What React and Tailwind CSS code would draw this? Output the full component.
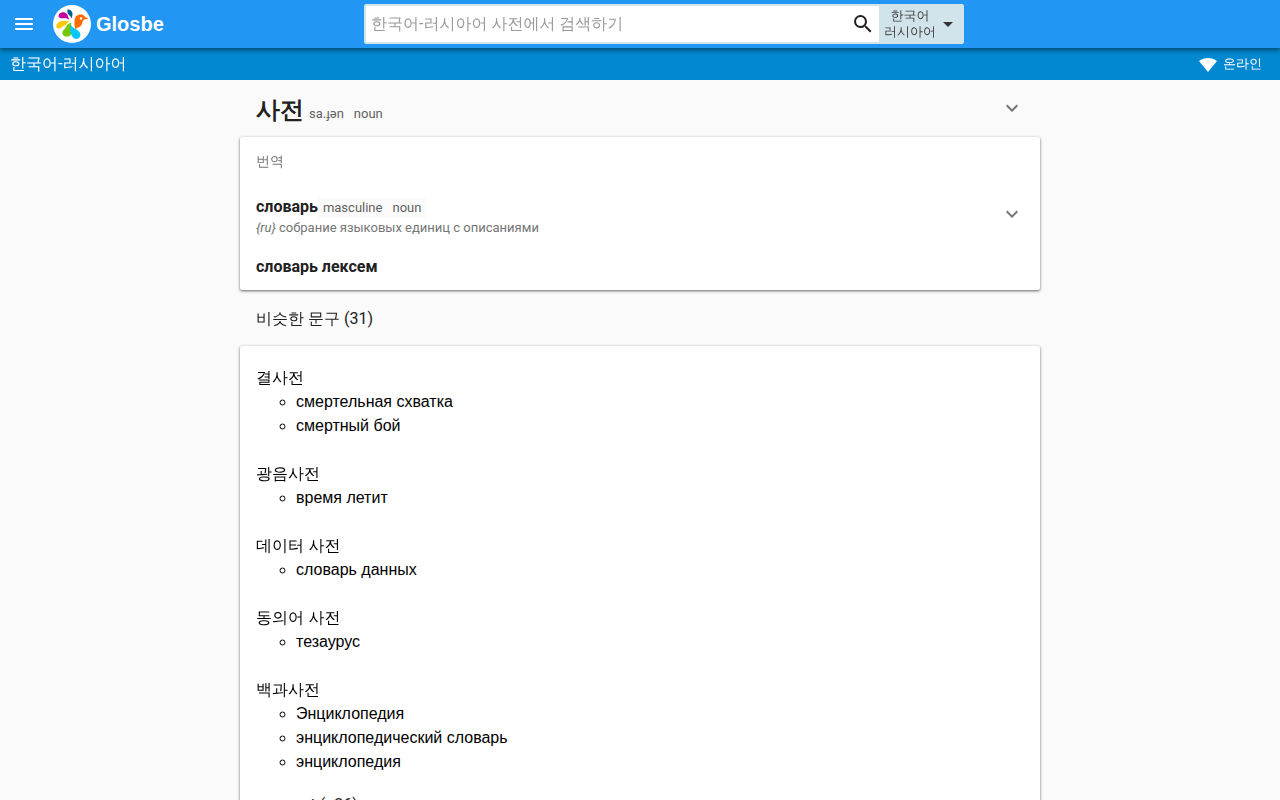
import { useState } from "react";

const phrases = [
  { source: "결사전", targets: ["смертельная схватка", "смертный бой"] },
  { source: "광음사전", targets: ["время летит"] },
  { source: "데이터 사전", targets: ["словарь данных"] },
  { source: "동의어 사전", targets: ["тезаурус"] },
  {
    source: "백과사전",
    targets: ["Энциклопедия", "энциклопедический словарь", "энциклопедия"],
  },
];

const Logo = () => (
  <svg viewBox="0 0 38 38" className="size-[38px]" aria-hidden="true">
    <circle cx="19" cy="19" r="19" fill="#fff" />
    <path d="M5.500 11c0-4 6-5 8.500-2 1.500 2 1 4 2.500 5.500-2 .2-2.500-1.500-4.500-1.500-3 .5-6.500.5-6.500-2z" fill="#c6009c" />
    <path d="M14.500 4.500c3 0 5 2 5 4.500 0 2-.8 2.500-.3 4.500-1.500-.8-1.200-2-2.700-3-2-1.500-2.500-3.500-2-6z" fill="#005e94" />
    <path d="M18 15.500c-3 .5-3.500 2.500-5 4-1.500 1.500-2.500 1-4 2.700-2 2.300-5.800 1.300-5.800-.7 0-3 2.800-5.500 6.300-5.500 3.500-.2 5.500.5 8.500-.5z" fill="#ffcb00" />
    <path d="M18.500 17.500c-1.500 3 .5 5 .5 8 0 4-2 6-5 6-3.500 0-5-2-4.500-4.500.5-2.500 2.500-2.500 3.500-5 .8-2 2.500-4 5.500-4.500z" fill="#76c900" />
    <path d="M18 20c1.500 3 4.500 3.500 7 5.500 3 2.500 3 5.500 1 7.500-2 1.800-5.500 1-7-2-1.500-3-2.500-7.500-1-11z" fill="#00c8ff" />
    <path d="M21.500 16c0-5 3.500-7 7-6.500 3 .5 3.500 3.500 7.300 4.300-2.300.7-4.800.2-5.800 2-1 2-.5 3.500-2.500 5.500-1.500 1.500-3.500 1-5 3-1.300-3-1-5.300-1-8.300z" fill="#ff6b00" />
    <circle cx="28" cy="13.500" r="1.200" fill="#fff" />
  </svg>
);

const Chevron = () => (
  <svg viewBox="0 0 24 24" className="size-6" fill="#757575" aria-hidden="true">
    <path d="M16.590 8.590 12 13.170 7.410 8.590 6 10l6 6 6-6z" />
  </svg>
);

const Tags = ({ items, className }) => (
  <span className={`px-[5px] text-[13px] leading-5 text-[#616161] ${className}`}>
    {items.map((item, i) => (
      <span key={item} className={i > 0 ? "ml-[10px]" : ""}>
        {item}
      </span>
    ))}
  </span>
);

const Header = () => {
  const [query, setQuery] = useState("");

  return (
    <header className="relative z-10 flex h-12 items-center bg-[#2196f3] text-white shadow-[0_2px_5px_rgba(0,0,0,0.5)]">
      <div className="flex flex-1 items-center">
        <button type="button" aria-label="Menu" className="ml-3">
          <svg viewBox="0 0 24 24" className="size-6" fill="currentColor">
            <path d="M3 18h18v-2H3v2zm0-5h18v-2H3v2zm0-7v2h18V6H3z" />
          </svg>
        </button>
        <a
          href="#home"
          className="ml-[17px] flex items-center gap-[5px] font-['Liberation_Sans',sans-serif] text-xl font-bold"
        >
          <Logo />
          Glosbe
        </a>
      </div>
      <form
        className="ml-12 flex h-10 w-full max-w-[600px] rounded-xs border-2 border-[#d1e4eb] bg-[#d1e4eb]"
        onSubmit={(e) => e.preventDefault()}
      >
        <input
          type="text"
          autoFocus
          aria-label="검색"
          placeholder="한국어-러시아어 사전에서 검색하기"
          className="min-w-0 flex-1 bg-white pl-[5px] text-base text-[#212121] outline-none placeholder:text-[#9a9a9a]"
          value={query}
          onChange={(e) => setQuery(e.target.value)}
        />
        <button type="submit" aria-label="검색" className="bg-white px-1">
          <svg viewBox="0 0 24 24" className="size-6" fill="#212121">
            <path d="M15.500 14h-.79l-.28-.27A6.471 6.471 0 0 0 16 9.500 6.500 6.500 0 1 0 9.500 16c1.610 0 3.090-.59 4.230-1.570l.27.28v.79l5 4.990L20.490 19l-4.990-5zm-6 0C7.010 14 5 11.990 5 9.500S7.010 5 9.500 5 14 7.010 14 9.500 11.990 14 9.500 14z" />
          </svg>
        </button>
        <button
          type="button"
          className="flex items-center pl-[5px] pr-[2px] text-[13px] leading-4 text-[#424242]"
        >
          <span className="text-center">
            한국어
            <br />
            러시아어
          </span>
          <svg viewBox="0 0 24 24" className="size-6" fill="#333">
            <path d="m7 10 5 5 5-5z" />
          </svg>
        </button>
      </form>
      <div className="flex-1 max-lg:hidden" />
    </header>
  );
};

export default function App() {
  return (
    <div className="min-h-screen bg-[#fafafa] font-[Roboto,'Liberation_Sans','WenQuanYi_Zen_Hei','Noto_Sans_CJK_KR',sans-serif] text-base text-[#212121]">
      <Header />
      <nav className="flex h-8 items-center justify-between bg-[#0288d1] pl-[10px] pr-[18px] text-white">
        <a href="#ko-ru">한국어-러시아어</a>
        <span className="flex items-center gap-[5px] text-[13px]">
          <svg viewBox="0 0 20 16" className="h-4 w-5" fill="#fff" aria-hidden="true">
            <path d="M1 5c5-4 13-4 18 0l-9 11z" />
          </svg>
          온라인
        </span>
      </nav>

      <main className="mx-auto max-w-[800px]">
        <div className="flex h-[57px] items-center justify-between px-4">
          <h1 className="pt-[2px] font-[Roboto,'Liberation_Sans',sans-serif] text-2xl font-bold">
            사전
            <Tags items={["sa.ɟən", "noun"]} className="font-normal" />
          </h1>
          <button type="button" aria-label="사전" className="mb-[2px]">
            <Chevron />
          </button>
        </div>

        <section className="rounded-xs bg-white px-4 shadow-[0_1px_3px_rgba(0,0,0,0.6)]">
          <h2 className="flex h-12 items-center text-sm text-[#757575]">번역</h2>
          <div className="flex items-start justify-between pt-3">
            <div>
              <h3 className="leading-5 font-bold">
                словарь
                <Tags
                  items={["masculine", "noun"]}
                  className="inline-block bg-[#fafafa] font-normal"
                />
              </h3>
              <p className="text-[13px] leading-5 text-[#757575]">
                <i>{"{ru}"}</i> собрание языковых единиц с описаниями
              </p>
            </div>
            <button type="button" aria-label="словарь" className="mt-[5px]">
              <Chevron />
            </button>
          </div>
          <h3 className="pt-[17px] pb-[11px] font-bold">словарь лексем</h3>
        </section>

        <h2 className="flex h-14 items-center px-4 pt-[2px]">비슷한 문구 (31)</h2>

        <section className="rounded-xs bg-white px-4 pt-5 pb-6 font-['Liberation_Sans','WenQuanYi_Zen_Hei','Noto_Sans_CJK_KR',sans-serif] text-black shadow-[0_1px_3px_rgba(0,0,0,0.6)]">
          {phrases.map((phrase) => (
            <div key={phrase.source} className="mb-6 last-of-type:mb-[19px]">
              {phrase.source}
              <ul className="list-[circle] pl-10">
                {phrase.targets.map((target) => (
                  <li key={target}>{target}</li>
                ))}
              </ul>
            </div>
          ))}
          <button type="button" className="font-[Roboto,sans-serif] text-[#212121]">
            see next (+26)
          </button>
        </section>
      </main>
    </div>
  );
}
